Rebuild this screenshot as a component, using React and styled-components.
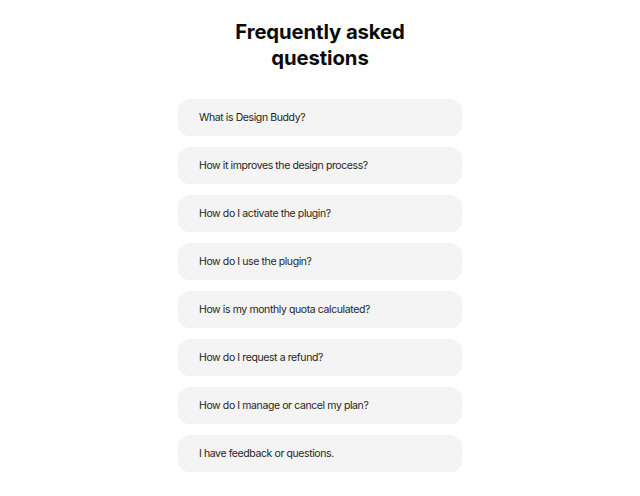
import React from 'react'
import styled, { createGlobalStyle } from 'styled-components'

const GlobalStyle = createGlobalStyle`
  html, body {
    margin: 0;
    padding: 0;
    background: #ffffff;
  }
  body {
    font-family: Inter, "Liberation Sans", sans-serif;
    -webkit-font-smoothing: antialiased;
  }
`

const Page = styled.div`
  width: 640px;
  min-height: 496px;
  display: flex;
  flex-direction: column;
  align-items: center;
  padding-top: 19px;
  box-sizing: border-box;
`

const Title = styled.h1`
  margin: 0 0 28px;
  width: 200px;
  text-align: center;
  font-size: 20.3px;
  line-height: 26px;
  font-weight: 700;
  color: #0a0a0a;
  letter-spacing: -0.1px;
`

const List = styled.div`
  width: 284px;
  display: flex;
  flex-direction: column;
  gap: 11px;
`

const Question = styled.div`
  height: 37px;
  display: flex;
  align-items: center;
  padding: 0 21px;
  box-sizing: border-box;
  background: #f4f4f4;
  border-radius: 12px;
  font-size: 10.5px;
  letter-spacing: -0.4px;
  color: #1f1f1f;
`

const questions = [
  'What is Design Buddy?',
  'How it improves the design process?',
  'How do I activate the plugin?',
  'How do I use the plugin?',
  'How is my monthly quota calculated?',
  'How do I request a refund?',
  'How do I manage or cancel my plan?',
  'I have feedback or questions.',
]

export default function App() {
  return (
    <>
      <GlobalStyle />
      <Page>
        <Title>Frequently asked questions</Title>
        <List>
          {questions.map((q) => (
            <Question key={q}>{q}</Question>
          ))}
        </List>
      </Page>
    </>
  )
}
